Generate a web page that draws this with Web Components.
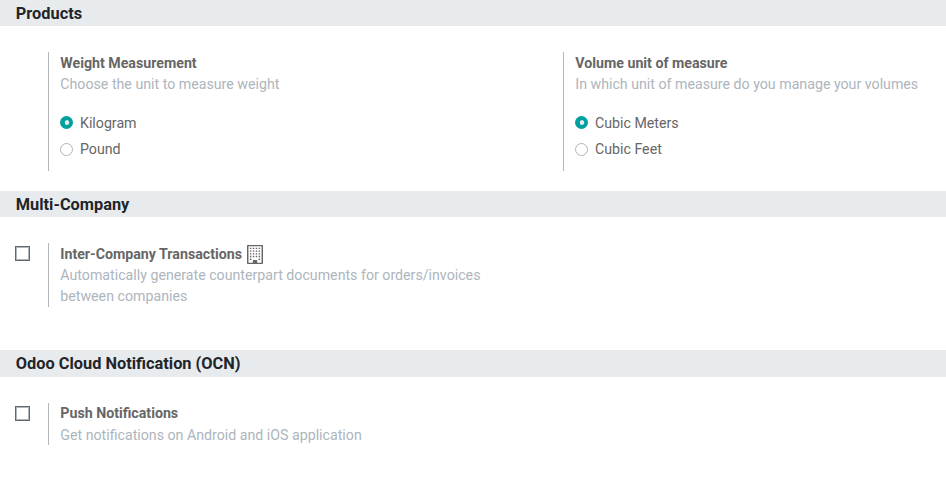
<!DOCTYPE html>
<html lang="en">
<head>
<meta charset="utf-8">
<title>Settings</title>
<style>
body { margin: 0; background: #fff; font: 14.2px/21px Roboto, "Liberation Sans", sans-serif; color: #666; }
</style>
</head>
<body>
<settings-page></settings-page>
<script>
const define = (name, html) => {
  const template = document.createElement('template');
  template.innerHTML = html;
  customElements.define(name, class extends HTMLElement {
    constructor() {
      super();
      this.attachShadow({ mode: 'open' }).append(template.content.cloneNode(true));
    }
  });
};

define('settings-section', `
<style>
:host { display: block; box-sizing: border-box; height: var(--section-height); }
h2 { margin: 0; box-sizing: border-box; height: var(--band-height, 26px); padding: 1px 0 0 15.8px; background: #e8ebee; color: #212529; font-size: 16.35px; font-weight: 700; line-height: 26px; }
.grid { display: grid; grid-template-columns: 515px 1fr; padding-top: 26px; align-items: start; }
</style>
<h2><slot name="title"></slot></h2>
<div class="grid"><slot></slot></div>`);

define('setting-box', `
<style>
:host { display: flex; }
.left { flex: 0 0 48px; box-sizing: border-box; padding: 3px 0 0 15px; }
.right { flex: 1; box-sizing: border-box; height: var(--box-height); border-left: 1px solid #b3b6b9; padding: var(--box-top, 1px) 0 0 11.3px; margin-right: 20px; }
.label { display: flex; height: var(--label-height, 21px); align-items: flex-start; gap: 5px; font-weight: 700; }
.help { color: #adb5bd; }
</style>
<div class="left"><slot name="control"></slot></div>
<div class="right">
<div class="label"><slot name="label"></slot><slot name="icon"></slot></div>
<div class="help"><slot name="help"></slot></div>
<slot></slot>
</div>`);

define('check-box', `
<style>
:host { display: block; box-sizing: border-box; width: 15px; height: 15px; border: 1px solid #666; background: #fff; box-shadow: inset 0 0 0 1px #adb5bd; }
</style>`);

define('radio-option', `
<style>
:host { display: flex; align-items: flex-start; gap: 7px; height: 21px; margin-bottom: 5px; }
svg { display: block; width: 13px; height: 13px; margin: 4px 0 0 -0.3px; }
.on { display: none; margin-top: 3px; }
:host([checked]) .on { display: block; }
:host([checked]) .off { display: none; }
</style>
<svg class="on" viewBox="0 0 13 13"><circle cx="6.5" cy="6.5" r="6.5" fill="#00a09d"/><ellipse cx="7" cy="6.5" rx="2.2" ry="2.5" fill="#e9ecef"/></svg>
<svg class="off" viewBox="0 0 13 13"><circle cx="6.5" cy="6.5" r="6" fill="#fff" stroke="#adb5bd"/></svg>
<span><slot></slot></span>`);

define('radio-group', `
<style>:host { display: block; padding-top: 18px; }</style>
<slot></slot>`);

define('building-icon', `
<style>:host { display: block; padding-top: 1px; } svg { display: block; }</style>
<svg width="16" height="19" viewBox="0 0 1408 1792" preserveAspectRatio="none" fill="#666">
<path fill-rule="evenodd" d="M64 0H1344Q1408 0 1408 64V1728Q1408 1792 1344 1792H64Q0 1792 0 1728V64Q0 0 64 0ZM128 128V1664H512V1440Q512 1408 544 1408H864Q896 1408 896 1440V1664H1280V128Z"/>
<path d="M256 256h128v128H256zM512 256h128v128H512zM768 256h128v128H768zM1024 256h128v128h-128zM256 512h128v128H256zM512 512h128v128H512zM768 512h128v128H768zM1024 512h128v128h-128zM256 768h128v128H256zM512 768h128v128H512zM768 768h128v128H768zM1024 768h128v128h-128zM256 1024h128v128H256zM512 1024h128v128H512zM768 1024h128v128H768zM1024 1024h128v128h-128zM256 1280h128v128H256zM1024 1280h128v128h-128z"/>
</svg>`);

define('settings-page', `
<style>
:host { display: block; width: 946px; height: 480px; overflow: hidden; }
.products { --section-height: 191px; --box-height: 119px; }
.company { --section-height: 159px; --box-height: 64px; }
.cloud { --section-height: 130px; --band-height: 27px; --box-height: 42px; --box-top: 0px; --label-height: 22px; }
</style>
<settings-section class="products"><span slot="title">Products</span>
<setting-box><span slot="label">Weight Measurement</span><span slot="help">Choose the unit to measure weight</span>
<radio-group><radio-option checked>Kilogram</radio-option><radio-option>Pound</radio-option></radio-group></setting-box>
<setting-box><span slot="label">Volume unit of measure</span><span slot="help">In which unit of measure do you manage your volumes</span>
<radio-group><radio-option checked>Cubic Meters</radio-option><radio-option>Cubic Feet</radio-option></radio-group></setting-box>
</settings-section>
<settings-section class="company"><span slot="title">Multi-Company</span>
<setting-box><check-box slot="control"></check-box><span slot="label">Inter-Company Transactions</span><building-icon slot="icon"></building-icon><span slot="help">Automatically generate counterpart documents for orders/invoices between companies</span></setting-box>
</settings-section>
<settings-section class="cloud"><span slot="title">Odoo Cloud Notification (OCN)</span>
<setting-box><check-box slot="control"></check-box><span slot="label">Push Notifications</span><span slot="help">Get notifications on Android and iOS application</span></setting-box>
</settings-section>`);
</script>
</body>
</html>
